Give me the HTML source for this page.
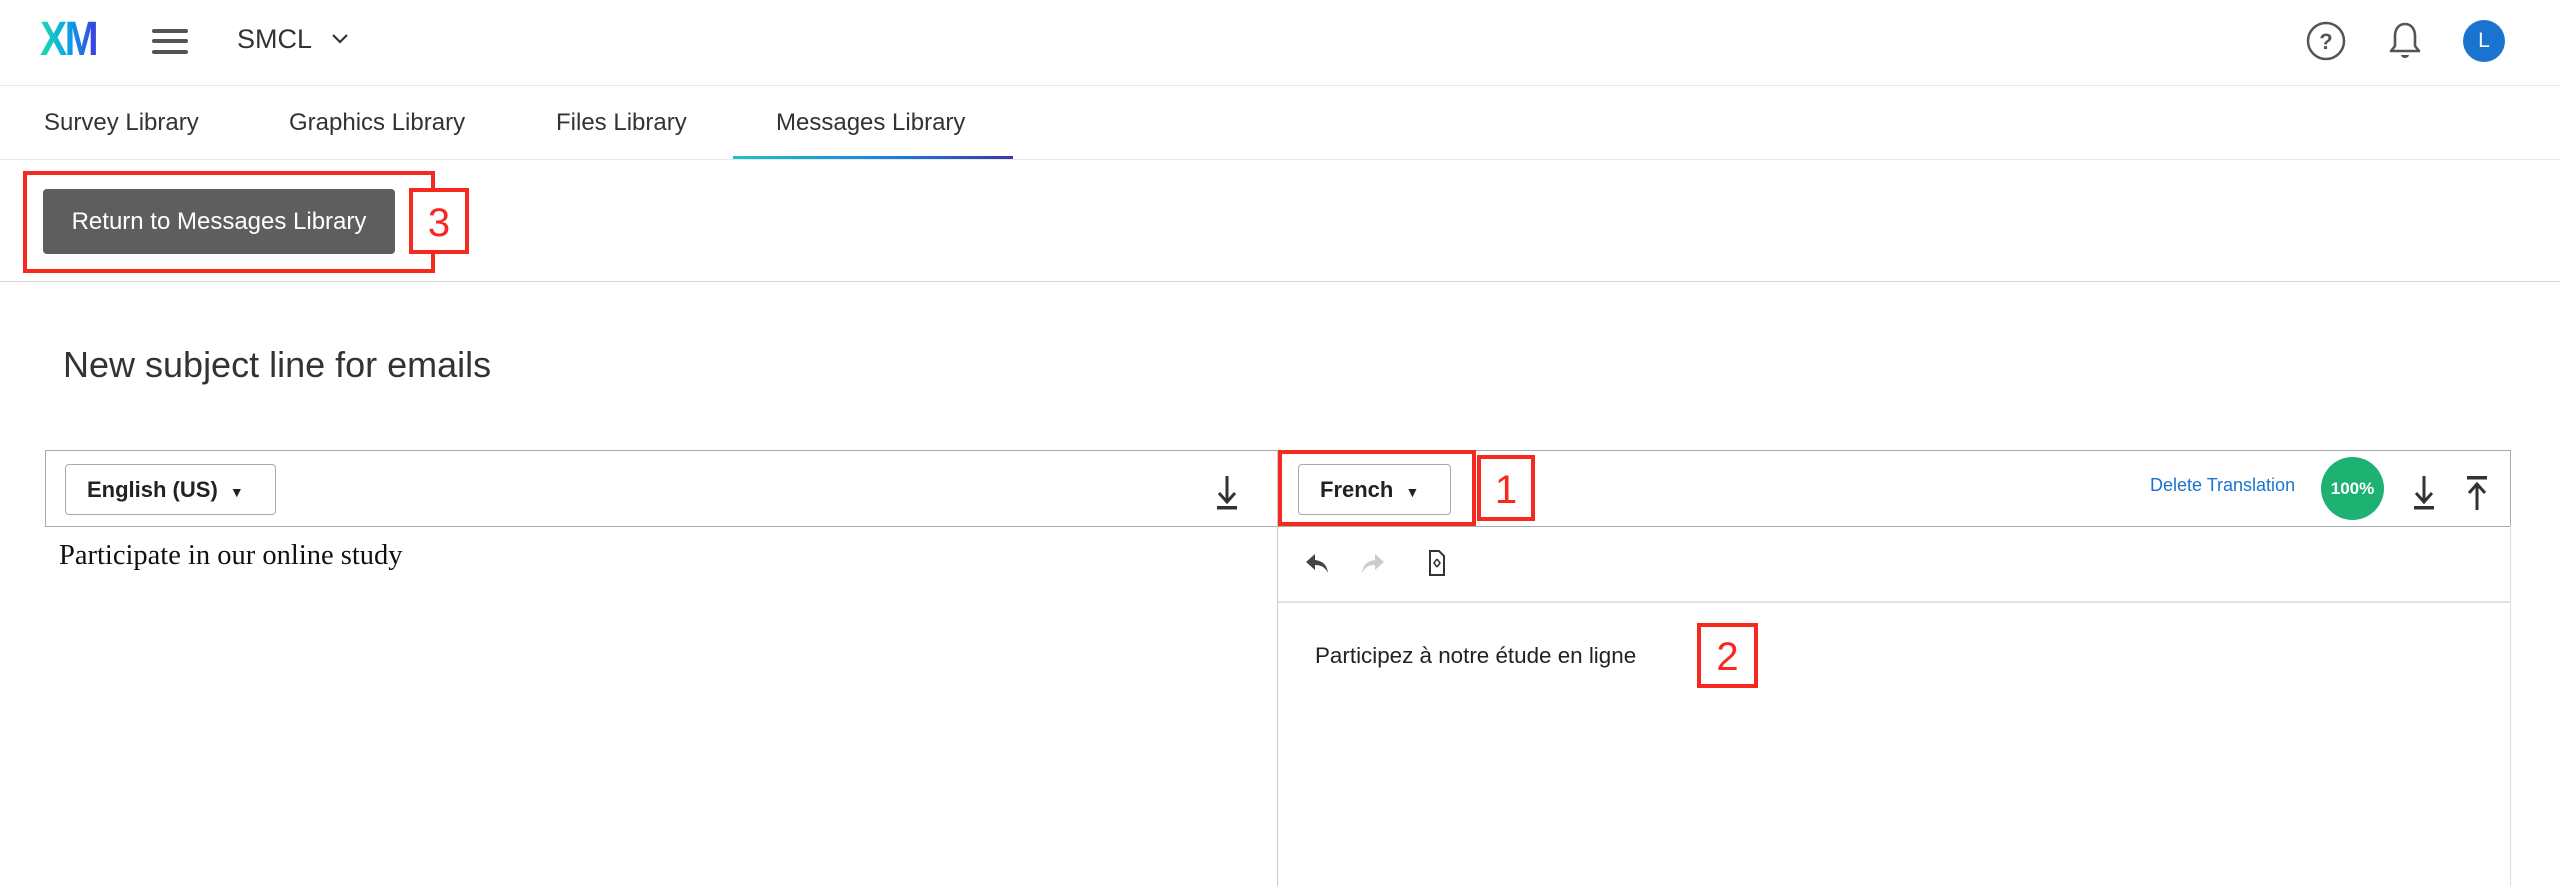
<!DOCTYPE html>
<html><head><meta charset="utf-8"><style>
*{margin:0;padding:0;box-sizing:border-box}
body{width:2560px;height:886px;background:#fff;position:relative;overflow:hidden;font-family:"Liberation Sans",sans-serif;color:#333}
.a{position:absolute}
.red{position:absolute;border:4px solid #f5291e}
.rn{position:absolute;color:#f5291e;font-size:40px;display:flex;align-items:center;justify-content:center;border:4px solid #f5291e;padding-top:4px;background:#fff}
</style></head><body>
<div class="a" style="left:40px;top:16px;font-size:48px;font-weight:bold;letter-spacing:-3px;transform:scaleX(0.85);transform-origin:left;background:linear-gradient(90deg,#21dbaa,#0ba3e8,#3a3ddd);-webkit-background-clip:text;color:transparent;line-height:48px">XM</div>
<div class="a" style="left:152px;top:29px;width:36px;height:4px;background:#525456;border-radius:2px"></div>
<div class="a" style="left:152px;top:39px;width:36px;height:4px;background:#525456;border-radius:2px"></div>
<div class="a" style="left:152px;top:50px;width:36px;height:4px;background:#525456;border-radius:2px"></div>
<div class="a" style="left:237px;top:24px;font-size:27px;color:#333">SMCL</div>
<svg class="a" style="left:330px;top:32px" width="20" height="14"><path d="M3 3l7 7 7-7" stroke="#333" stroke-width="2.2" fill="none"/></svg>
<svg class="a" style="left:2304px;top:20px" width="44" height="44"><circle cx="22" cy="21" r="18" stroke="#525456" stroke-width="2.5" fill="none"/><text x="22" y="29" text-anchor="middle" font-size="22" font-weight="bold" fill="#525456" font-family="Liberation Sans">?</text></svg>
<svg class="a" style="left:2385px;top:20px" width="40" height="42"><path d="M20 4c-7 0-10 6-10 12v10l-4 5h28l-4-5V16c0-6-3-12-10-12z" stroke="#525456" stroke-width="2.6" fill="none" stroke-linejoin="round"/><path d="M16 35a4 3 0 0 0 8 0z" fill="#525456"/></svg>
<div class="a" style="left:2463px;top:20px;width:42px;height:42px;border-radius:50%;background:#1a73cf;color:#fff;font-size:21px;text-align:center;line-height:42px">L</div>
<div class="a" style="left:0;top:85px;width:2560px;height:1px;background:#e8e8e8"></div>
<div class="a" style="left:44px;top:109px;font-size:24px">Survey Library</div>
<div class="a" style="left:289px;top:109px;font-size:24px">Graphics Library</div>
<div class="a" style="left:556px;top:109px;font-size:24px">Files Library</div>
<div class="a" style="left:776px;top:109px;font-size:24px">Messages Library</div>
<div class="a" style="left:733px;top:156px;width:280px;height:4px;background:linear-gradient(90deg,#22c1c3,#1a8ae0,#3b36a8)"></div>
<div class="a" style="left:0;top:159px;width:2560px;height:1px;background:#e8e8e8"></div>
<div class="a" style="left:43px;top:189px;width:352px;height:65px;background:#5e5e5e;border-radius:4px;color:#fff;font-size:24px;text-align:center;line-height:65px">Return to Messages Library</div>
<div class="red" style="left:23px;top:171px;width:412px;height:102px"></div>
<div class="rn" style="left:409px;top:188px;width:60px;height:66px">3</div>
<div class="a" style="left:0;top:281px;width:2560px;height:1px;background:#d5d5d5"></div>
<div class="a" style="left:63px;top:344px;font-size:36px;color:#333">New subject line for emails</div>
<div class="a" style="left:45px;top:450px;width:2466px;height:77px;border:1.5px solid #aaa"></div>
<div class="a" style="left:1277px;top:450px;width:1px;height:436px;background:#ccc"></div>
<div class="a" style="left:2510px;top:526px;width:1px;height:360px;background:#ddd"></div>
<div class="a" style="left:65px;top:464px;width:211px;height:51px;border:1px solid #aaa;border-radius:4px;font-size:22px;font-weight:bold;line-height:49px;padding-left:21px;color:#222">English (US) <span style="font-size:14px;margin-left:6px">▼</span></div>
<svg class="a" style="left:1214px;top:474px" width="26" height="38"><path d="M13 2v26M5 19l8 9 8-9" stroke="#333" stroke-width="3" fill="none"/><rect x="3" y="32" width="20" height="3.5" fill="#333"/></svg>
<div class="a" style="left:1298px;top:464px;width:153px;height:51px;border:1px solid #aaa;border-radius:4px;font-size:22px;font-weight:bold;line-height:49px;padding-left:21px;color:#222">French <span style="font-size:14px;margin-left:6px">▼</span></div>
<div class="red" style="left:1278px;top:450px;width:198px;height:76px"></div>
<div class="rn" style="left:1477px;top:455px;width:58px;height:66px">1</div>
<div class="a" style="left:2150px;top:475px;font-size:18px;color:#1a73cf">Delete Translation</div>
<div class="a" style="left:2321px;top:457px;width:63px;height:63px;border-radius:50%;background:#1eb272;color:#fff;font-size:17px;font-weight:bold;text-align:center;line-height:63px">100%</div>
<svg class="a" style="left:2411px;top:474px" width="26" height="38"><path d="M13 2v26M5 19l8 9 8-9" stroke="#333" stroke-width="3" fill="none"/><rect x="3" y="32" width="20" height="3.5" fill="#333"/></svg>
<svg class="a" style="left:2464px;top:474px" width="26" height="38"><rect x="3" y="2" width="20" height="3.5" fill="#333"/><path d="M13 36V10M5 19l8-9 8 9" stroke="#333" stroke-width="3" fill="none"/></svg>
<div class="a" style="left:59px;top:540px;font-family:'Liberation Serif',serif;font-size:28.5px;color:#111">Participate in our online study</div>
<svg class="a" style="left:1304px;top:550px" width="26" height="26"><path d="M11 4L2 12l9 8v-5c6 0 10 2 13 8-1-8-5-12-13-13z" fill="#444"/></svg>
<svg class="a" style="left:1360px;top:550px" width="26" height="26"><path d="M15 4l9 8-9 8v-5c-6 0-10 2-13 8 1-8 5-12 13-13z" fill="#ccc"/></svg>
<svg class="a" style="left:1428px;top:549px" width="18" height="28"><path d="M2 2h9l5 5v19H2z" stroke="#333" stroke-width="2" fill="none"/><path d="M9 10l-3 4 3 4M9 10l3 4-3 4" stroke="#333" stroke-width="1.5" fill="none"/></svg>
<div class="a" style="left:1278px;top:601px;width:1232px;height:2px;background:#e2e2e2"></div>
<div class="a" style="left:1315px;top:643px;font-size:22.4px;color:#222">Participez à notre étude en ligne</div>
<div class="rn" style="left:1697px;top:623px;width:61px;height:65px">2</div>
</body></html>
